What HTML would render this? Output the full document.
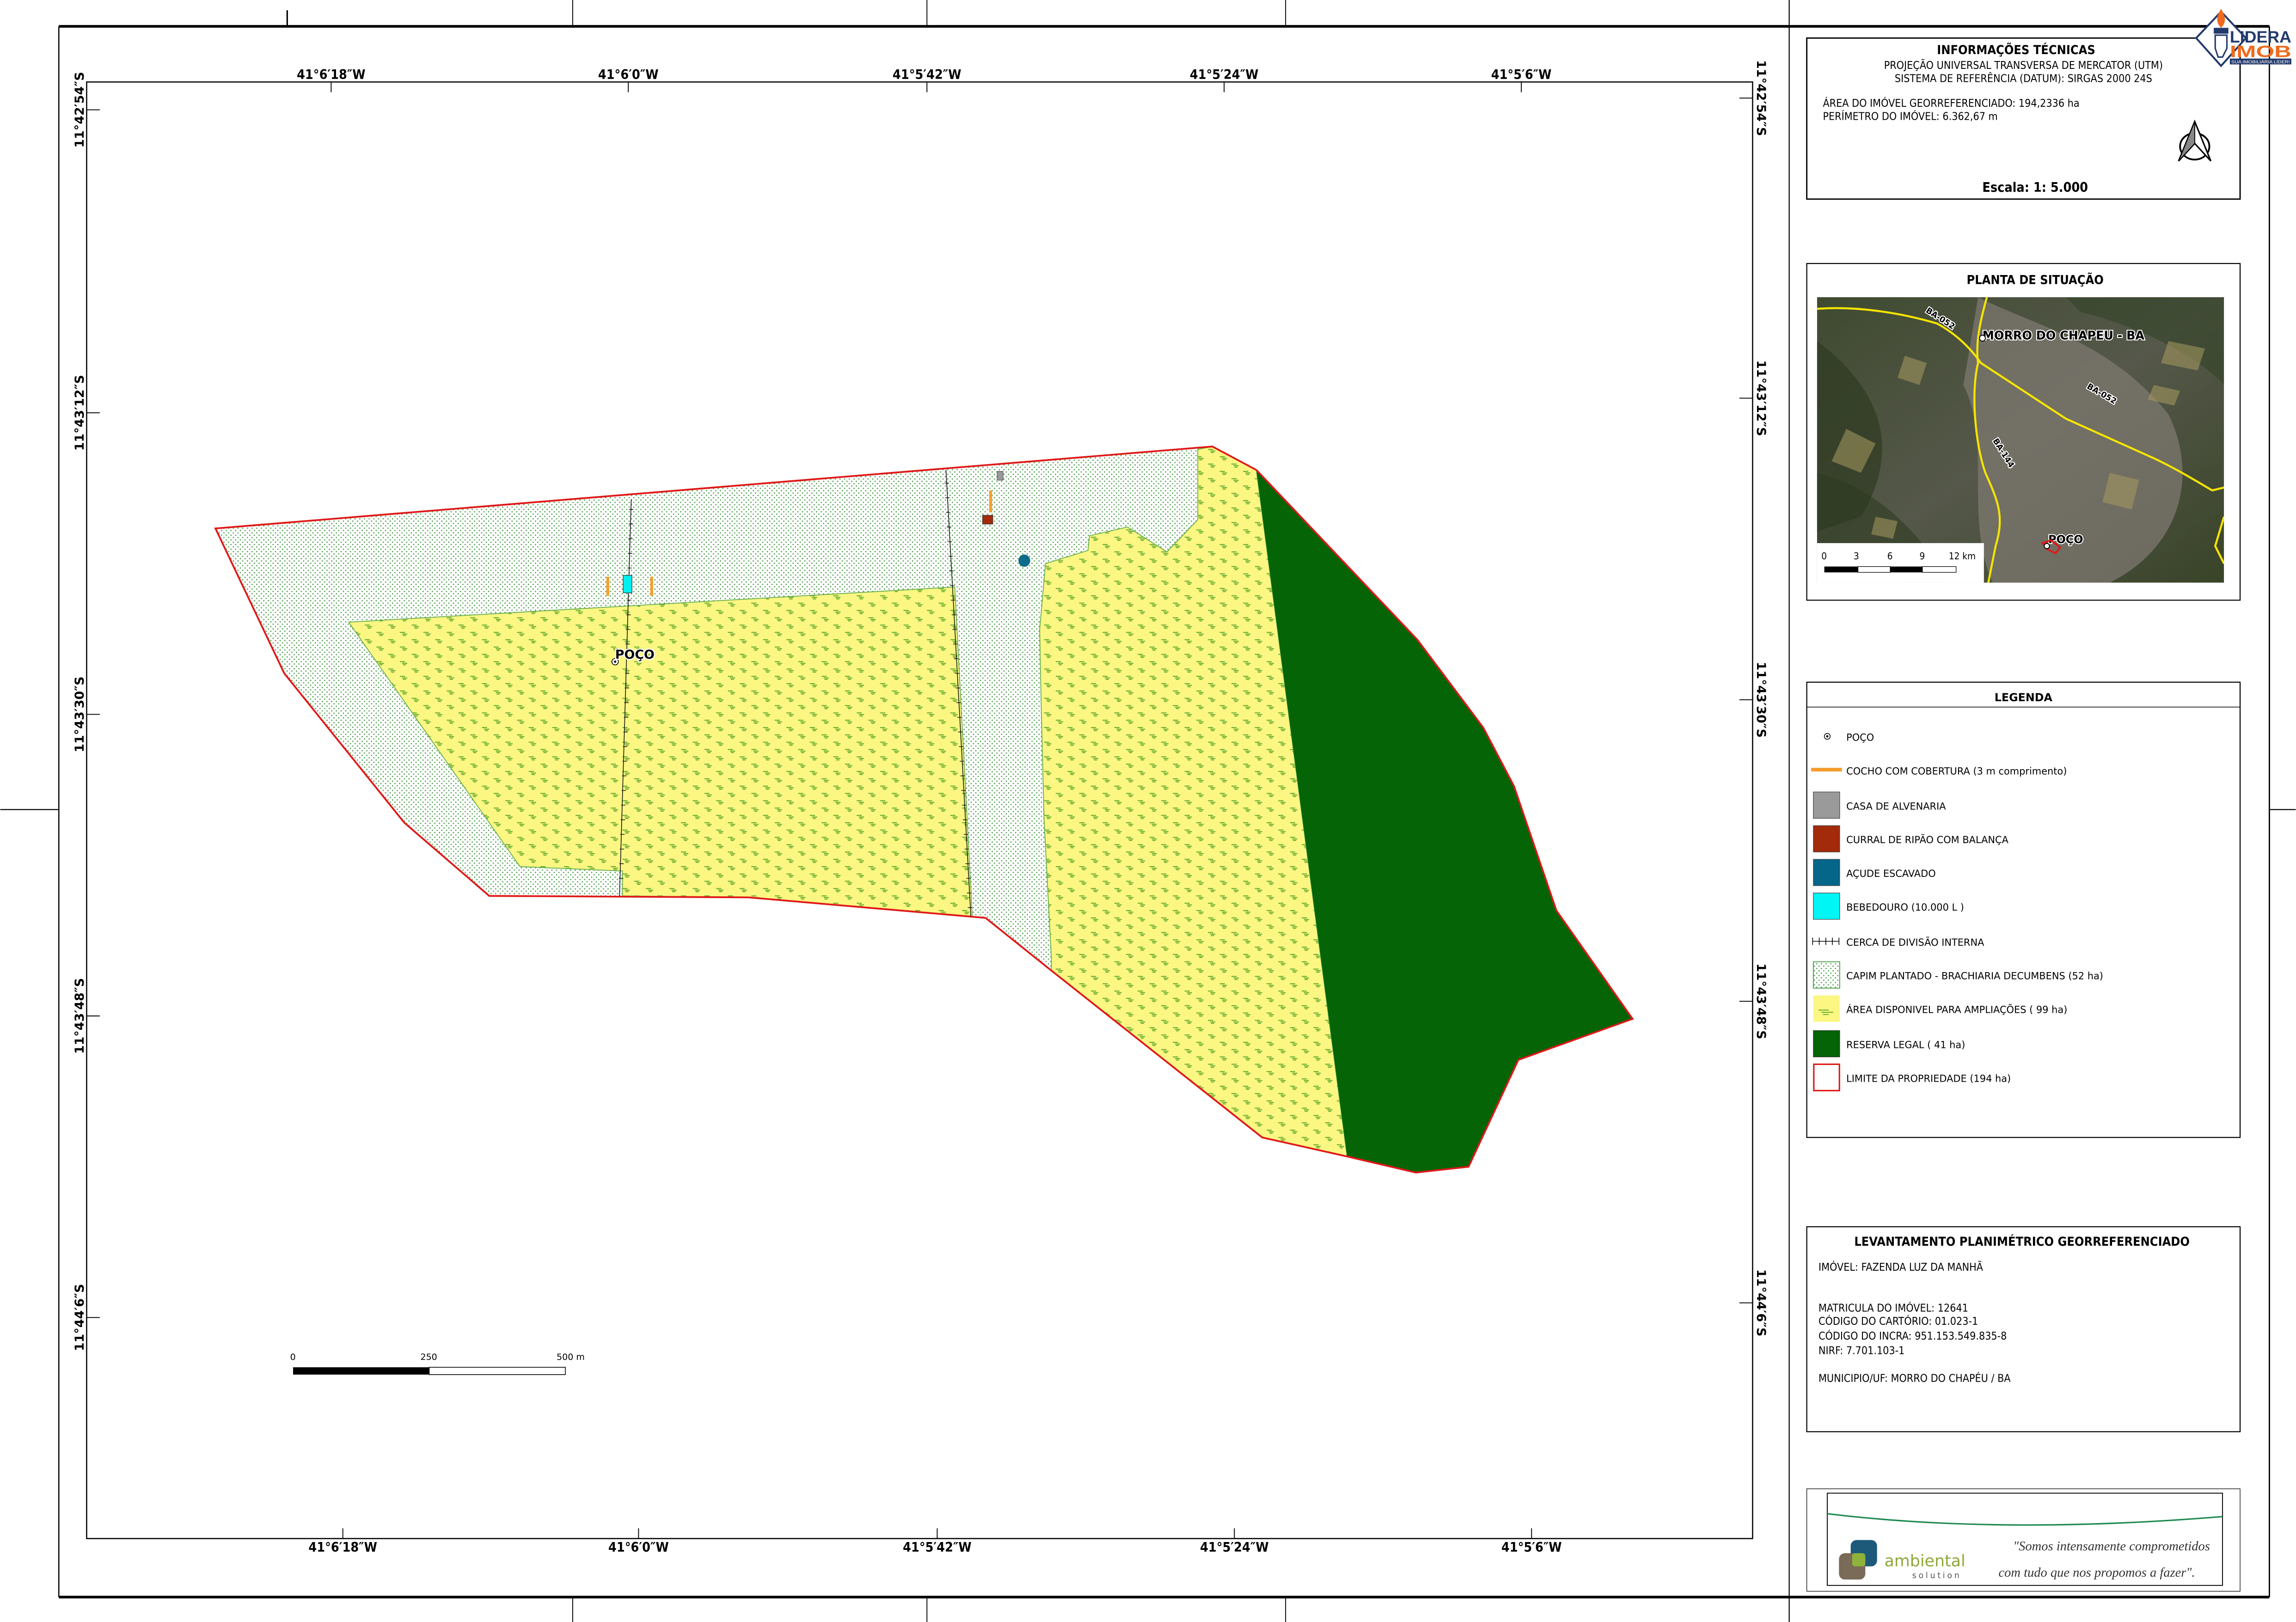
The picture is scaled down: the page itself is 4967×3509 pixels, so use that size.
<!DOCTYPE html>
<html><head><meta charset="utf-8"><style>
html,body{margin:0;padding:0;background:#fff;}
svg{display:block;}
.c{font-family:"DejaVu Sans Condensed","DejaVu Sans","Liberation Sans",sans-serif;}
.v{font-family:"DejaVu Sans","Liberation Sans",sans-serif;}
</style></head><body>
<svg width="4967" height="3509" viewBox="0 0 1568 1108" xmlns="http://www.w3.org/2000/svg">
<defs>
<pattern id="dots" width="3.2" height="3.2" patternUnits="userSpaceOnUse">
<rect width="3.2" height="3.2" fill="#fff"/>
<circle cx="0.8" cy="0.8" r="0.45" fill="#4f9e4f"/>
<circle cx="2.4" cy="2.4" r="0.45" fill="#4f9e4f"/>
</pattern>
<pattern id="grass" width="16" height="10" patternUnits="userSpaceOnUse">
<rect width="16" height="10" fill="#fbf782"/>
<g stroke="#5ea82a" stroke-width="0.65">
<line x1="1" y1="2" x2="4.5" y2="2"/><line x1="2.5" y1="3.1" x2="6" y2="3.1"/><line x1="3" y1="4.1" x2="5.2" y2="4.1"/>
<line x1="9" y1="7" x2="12.5" y2="7"/><line x1="10.5" y1="8.1" x2="14" y2="8.1"/><line x1="11" y1="9.1" x2="13.2" y2="9.1"/>
</g>
</pattern>
<linearGradient id="sat" x1="0" y1="0" x2="1" y2="1">
<stop offset="0" stop-color="#3f4a30"/><stop offset="0.5" stop-color="#55584a"/><stop offset="1" stop-color="#394428"/>
</linearGradient>
</defs>

<g stroke="#000" fill="none">
<line x1="40" y1="18" x2="1550" y2="18" stroke-width="1.8"/>
<line x1="40" y1="1091" x2="1550" y2="1091" stroke-width="1.8"/>
<line x1="40" y1="18" x2="40" y2="1091" stroke-width="0.8"/>
<line x1="1550" y1="18" x2="1550" y2="1091" stroke-width="0.9"/>
<line x1="1222" y1="0" x2="1222" y2="1108" stroke-width="0.7"/>
<line x1="196" y1="7" x2="196" y2="18" stroke-width="1"/>
<line x1="391" y1="0" x2="391" y2="18" stroke-width="0.6"/>
<line x1="633" y1="0" x2="633" y2="18" stroke-width="0.6"/>
<line x1="878" y1="0" x2="878" y2="18" stroke-width="0.6"/>
<line x1="391" y1="1091" x2="391" y2="1108" stroke-width="0.6"/>
<line x1="633" y1="1091" x2="633" y2="1108" stroke-width="0.6"/>
<line x1="878" y1="1091" x2="878" y2="1108" stroke-width="0.6"/>
<line x1="0" y1="553" x2="40" y2="553" stroke-width="0.7"/>
<line x1="1550" y1="553" x2="1568" y2="553" stroke-width="0.7"/>
<rect x="59" y="56" width="1138" height="995" stroke-width="0.8"/>
</g>
<g stroke="#000" stroke-width="0.6">
<line x1="226" y1="56" x2="226" y2="63"/><line x1="429" y1="56" x2="429" y2="63"/><line x1="633" y1="56" x2="633" y2="63"/><line x1="836" y1="56" x2="836" y2="63"/><line x1="1039" y1="56" x2="1039" y2="63"/>
<line x1="234" y1="1044" x2="234" y2="1051"/><line x1="436" y1="1044" x2="436" y2="1051"/><line x1="640" y1="1044" x2="640" y2="1051"/><line x1="843" y1="1044" x2="843" y2="1051"/><line x1="1046" y1="1044" x2="1046" y2="1051"/>
<line x1="59" y1="75" x2="68" y2="75"/><line x1="59" y1="282" x2="68" y2="282"/><line x1="59" y1="488" x2="68" y2="488"/><line x1="59" y1="694" x2="68" y2="694"/><line x1="59" y1="900" x2="68" y2="900"/>
<line x1="1188" y1="67" x2="1197" y2="67"/><line x1="1188" y1="272" x2="1197" y2="272"/><line x1="1188" y1="478" x2="1197" y2="478"/><line x1="1188" y1="684" x2="1197" y2="684"/><line x1="1188" y1="890" x2="1197" y2="890"/>
</g>
<g class="c" font-weight="bold" font-size="9" text-anchor="middle" fill="#000">
<text x="226" y="54">41°6′18″W</text><text x="429" y="54">41°6′0″W</text><text x="633" y="54">41°5′42″W</text><text x="836" y="54">41°5′24″W</text><text x="1039" y="54">41°5′6″W</text>
<text x="234" y="1060">41°6′18″W</text><text x="436" y="1060">41°6′0″W</text><text x="640" y="1060">41°5′42″W</text><text x="843" y="1060">41°5′24″W</text><text x="1046" y="1060">41°5′6″W</text>
</g>
<g class="v" font-weight="bold" font-size="8.5" text-anchor="middle" fill="#000">
<text transform="translate(57,75) rotate(-90)">11°42′54″S</text>
<text transform="translate(57,282) rotate(-90)">11°43′12″S</text>
<text transform="translate(57,488) rotate(-90)">11°43′30″S</text>
<text transform="translate(57,694) rotate(-90)">11°43′48″S</text>
<text transform="translate(57,900) rotate(-90)">11°44′6″S</text>
<text transform="translate(1200,67) rotate(90)">11°42′54″S</text>
<text transform="translate(1200,272) rotate(90)">11°43′12″S</text>
<text transform="translate(1200,478) rotate(90)">11°43′30″S</text>
<text transform="translate(1200,684) rotate(90)">11°43′48″S</text>
<text transform="translate(1200,890) rotate(90)">11°44′6″S</text>
</g>

<polygon points="147,361 828,305 858,321 968,437 1013,497 1034,537 1063,622 1115,696 1037,724 1003,797 967,801 920,790 862,777 718,663 673,627 511,613 334,612 276,562 194,460" fill="url(#dots)"/>
<polygon points="238,425 652,401 664,626 511,613 425,612 425,595 355,592" fill="url(#grass)" stroke="#6ab04c" stroke-width="0.6"/>
<polygon points="818,307 828,305 858,321 920,790 862,777 718,663 718,655 713,560 711,480 710,430 714,385 743,376 744,366 770,360 797,377 818,355" fill="url(#grass)" stroke="#6ab04c" stroke-width="0.6"/>
<polygon points="858,321 968,437 1013,497 1034,537 1063,622 1115,696 1037,724 1003,797 967,801 920,790" fill="#056405"/>
<polygon points="147,361 828,305 858,321 968,437 1013,497 1034,537 1063,622 1115,696 1037,724 1003,797 967,801 920,790 862,777 718,663 673,627 511,613 334,612 276,562 194,460" fill="none" stroke="#e01818" stroke-width="1.2"/>
<g stroke="#111" stroke-width="0.5">
<line x1="431" y1="341" x2="423" y2="612"/>
<line x1="646" y1="321" x2="663" y2="626"/>
</g>
<g stroke="#111" stroke-width="0.45">
<path d="M429.5 348h3M429.3 358h3M429 368h3M428.7 378h3M428.4 388h3M428 410h3M427.7 420h3M427.4 430h3M427.1 440h3M426.8 460h3M426.5 470h3M426.2 480h3M425.9 490h3M425.6 500h3M425.3 510h3M425 520h3M424.7 530h3M424.4 540h3M424.1 550h3M423.8 560h3M423.5 570h3M423.2 580h3M422.9 590h3M422.6 600h3"/>
<path d="M645 330h3M645.5 340h3M646 350h3M646.6 360h3M647.1 370h3M647.7 380h3M648.2 390h3M648.8 400h3M649.3 410h3M649.9 420h3M650.4 430h3M651 440h3M651.5 450h3M652.1 460h3M652.6 470h3M653.2 480h3M653.7 490h3M654.3 500h3M654.8 510h3M655.4 520h3M655.9 530h3M656.5 540h3M657 550h3M657.6 560h3M658.1 570h3M658.7 580h3M659.2 590h3M659.8 600h3M660.3 610h3M660.9 620h3"/>
</g>
<rect x="414" y="394" width="2" height="13" fill="#f5a030"/>
<rect x="444" y="394" width="2" height="13" fill="#f5a030"/>
<rect x="425.5" y="393" width="6" height="12" fill="#00f0f0" stroke="#333" stroke-width="0.4"/>
<rect x="681" y="322" width="4" height="6" fill="#9a9a9a" stroke="#555" stroke-width="0.4"/>
<rect x="675.5" y="335" width="2" height="15" fill="#f5a030"/>
<rect x="671" y="352" width="7" height="6" fill="#a32a0a" stroke="#333" stroke-width="0.4"/>
<ellipse cx="699.5" cy="383" rx="4" ry="4.2" fill="#0c6a8a"/>
<circle cx="420" cy="452" r="2.2" fill="#fff" stroke="#000" stroke-width="0.5"/><circle cx="420" cy="452" r="0.8" fill="#000"/>
<text x="420" y="450" class="v" font-weight="bold" font-size="8.5" fill="#000" stroke="#fff" stroke-width="1.5" paint-order="stroke">POÇO</text>
<g class="v" font-size="6" fill="#000">
<text x="198" y="929">0</text><text x="287" y="929">250</text><text x="380" y="929">500 m</text>
</g>
<rect x="200" y="934" width="93" height="5" fill="#000"/>
<rect x="293" y="934" width="93" height="5" fill="#fff" stroke="#000" stroke-width="0.5"/>

<rect x="1234" y="26" width="296" height="110" fill="#fff" stroke="#000" stroke-width="0.9"/>
<g class="c" fill="#000">
<text x="1377" y="37" font-size="8.5" font-weight="bold" text-anchor="middle">INFORMAÇÕES TÉCNICAS</text>
<text x="1382" y="47" font-size="7.3" text-anchor="middle">PROJEÇÃO UNIVERSAL TRANSVERSA DE MERCATOR (UTM)</text>
<text x="1382" y="56" font-size="7.3" text-anchor="middle">SISTEMA DE REFERÊNCIA (DATUM): SIRGAS 2000 24S</text>
<text x="1245" y="73" font-size="7.3">ÁREA DO IMÓVEL GEORREFERENCIADO: 194,2336 ha</text>
<text x="1245" y="82" font-size="7.3">PERÍMETRO DO IMÓVEL: 6.362,67 m</text>
<text x="1390" y="131" font-size="9" font-weight="bold" text-anchor="middle">Escala: 1: 5.000</text>
</g>
<g transform="translate(1499,97)">
<ellipse cx="0" cy="3" rx="10" ry="9" fill="none" stroke="#000" stroke-width="1.2"/>
<path d="M0 -14 L-11 13 L0 1 L11 13 Z" fill="#fff" stroke="#000" stroke-width="1"/>
<path d="M0 -14 L-11 13 L0 1 Z" fill="#888" stroke="#000" stroke-width="0.6"/>
</g>
<g transform="translate(1500,4)">
<path d="M17 4 L34 22 L17 41 L0 22 Z" fill="#fff" stroke="#233a6b" stroke-width="1.3"/>
<path d="M17 2 C14 7 13 11 17 15 C21 11 20 7 17 2Z" fill="#ee6a1c"/>
<rect x="12" y="15" width="10" height="4" fill="#233a6b"/>
<path d="M13 20 h8 v9 l-3 6 h-3 l-2-6z" fill="#fff" stroke="#233a6b" stroke-width="1"/>
<text x="23" y="25" font-family="Liberation Sans,sans-serif" font-weight="bold" font-size="11" fill="#233a6b" textLength="42" lengthAdjust="spacingAndGlyphs">LIDERA</text>
<text x="23" y="35" font-family="Liberation Sans,sans-serif" font-weight="bold" font-size="11" fill="#ee6a1c" textLength="42" lengthAdjust="spacingAndGlyphs">IMOB</text>
<rect x="23" y="36" width="42" height="4" fill="#233a6b"/>
<text x="24" y="39.3" font-family="Liberation Sans,sans-serif" font-size="3" fill="#fff" textLength="40" lengthAdjust="spacingAndGlyphs">SUA IMOBILIÁRIA LÍDER!</text>
</g>

<rect x="1234" y="180" width="296" height="230" fill="#fff" stroke="#000" stroke-width="0.7"/>
<text x="1390" y="194" class="c" font-size="8.5" font-weight="bold" text-anchor="middle">PLANTA DE SITUAÇÃO</text>
<svg x="1241" y="203" width="278" height="195" viewBox="0 0 278 195">
<rect width="278" height="195" fill="url(#sat)"/>
<path d="M110 0 C150 20 200 30 240 80 C260 120 250 170 200 195 L120 195 C100 150 120 100 100 60Z" fill="#7e7870" opacity="0.75"/>
<path d="M0 30 C40 60 60 100 30 150 L0 160Z" fill="#2f3b22" opacity="0.7"/>
<path d="M180 10 C220 20 260 40 278 60 L278 0 L170 0Z" fill="#334228" opacity="0.6"/>
<path d="M0 120 C40 130 70 160 90 195 L0 195Z" fill="#2e3a22" opacity="0.6"/>
<path d="M20 90 l20 10 l-10 20 l-20-8z M60 40 l15 5 l-5 15 l-15-5z M200 120 l20 5 l-5 20 l-20-5z M240 30 l25 5 l-5 15 l-25-5z M40 150 l15 3 l-3 12 l-15-3z M230 60 l18 4 l-4 10 l-18-4z" fill="#a89a60" opacity="0.55"/>
<path d="M0 8 C25 6 55 10 82 18 C95 25 105 35 112 45 L170 83 L230 110 C245 117 258 125 270 132 L278 130" fill="none" stroke="#f5e400" stroke-width="1.4"/>
<path d="M116 0 C112 15 108 30 110 45 C105 65 108 100 115 120 C124 140 128 150 122 170 L117 195" fill="none" stroke="#f5e400" stroke-width="1.4"/>
<path d="M278 150 L272 170 L278 182" fill="none" stroke="#f5e400" stroke-width="1.4"/>
<g font-family="DejaVu Sans,sans-serif" font-weight="bold" fill="#000" stroke="#fff" stroke-width="1.3" paint-order="stroke">
<text x="113" y="29" font-size="8">MORRO DO CHAPEU - BA</text>
<text x="158" y="168" font-size="7.5">POÇO</text>
<text transform="translate(74,10) rotate(33)" font-size="5.5">BA-052</text>
<text transform="translate(184,62) rotate(30)" font-size="5.5">BA-052</text>
<text transform="translate(120,98) rotate(58)" font-size="5.5">BA-144</text>
</g>
<circle cx="113" cy="28" r="2" fill="#fff" stroke="#000" stroke-width="0.6"/>
<path d="M154 168 l6 -2 l6 5 l-3 4 l-6 -3z" fill="none" stroke="#e01818" stroke-width="1.2"/>
<circle cx="157" cy="170" r="1.8" fill="#fff" stroke="#000" stroke-width="0.6"/>
<rect x="0" y="168" width="114" height="27" fill="#fff"/>
<g font-family="DejaVu Sans Condensed,sans-serif" font-size="6.5" fill="#000">
<text x="3" y="179">0</text><text x="25" y="179">3</text><text x="48" y="179">6</text><text x="70" y="179">9</text><text x="90" y="179">12 km</text>
</g>
<rect x="5" y="184" width="23" height="4" fill="#000"/><rect x="28" y="184" width="22" height="4" fill="#fff" stroke="#000" stroke-width="0.4"/>
<rect x="50" y="184" width="22" height="4" fill="#000"/><rect x="72" y="184" width="23" height="4" fill="#fff" stroke="#000" stroke-width="0.4"/>
</svg>

<rect x="1234" y="466" width="296" height="311" fill="#fff" stroke="#000" stroke-width="0.7"/>
<line x1="1234" y1="483" x2="1530" y2="483" stroke="#000" stroke-width="0.5"/>
<text x="1382" y="479" class="v" font-size="7.5" font-weight="bold" text-anchor="middle">LEGENDA</text>
<circle cx="1248" cy="503" r="2" fill="#fff" stroke="#000" stroke-width="0.5"/><circle cx="1248" cy="503" r="0.8" fill="#000"/>
<rect x="1237" y="524.5" width="21" height="2.5" fill="#f59c30"/>
<rect x="1238.5" y="541" width="18" height="18" fill="#9a9a9a" stroke="#444" stroke-width="0.4"/>
<rect x="1238.5" y="564" width="18" height="18" fill="#a32a0a" stroke="#444" stroke-width="0.4"/>
<rect x="1238.5" y="587" width="18" height="18" fill="#05668a" stroke="#444" stroke-width="0.4"/>
<rect x="1238.5" y="610" width="18" height="18" fill="#00f5f5" stroke="#444" stroke-width="0.4"/>
<g stroke="#000" stroke-width="0.5"><line x1="1238" y1="643" x2="1256" y2="643"/><path d="M1238 640.5v5M1242.5 640.5v5M1247 640.5v5M1251.5 640.5v5M1256 640.5v5"/></g>
<rect x="1238.5" y="657" width="18" height="18" fill="url(#dots)" stroke="#4f9e4f" stroke-width="0.6"/>
<rect x="1238.5" y="680" width="18" height="18" fill="#fbf782"/>
<g stroke="#5ea82a" stroke-width="0.6"><line x1="1242" y1="690" x2="1249" y2="690"/><line x1="1244" y1="691.5" x2="1252" y2="691.5"/><line x1="1245" y1="693" x2="1249" y2="693"/></g>
<rect x="1238.5" y="704" width="18" height="18" fill="#056405" stroke="#333" stroke-width="0.4"/>
<rect x="1238.8" y="727" width="17.5" height="18" fill="#fff" stroke="#e01818" stroke-width="1"/>
<g class="v" font-size="6.6" fill="#000">
<text x="1261" y="506">POÇO</text>
<text x="1261" y="529">COCHO COM COBERTURA (3 m comprimento)</text>
<text x="1261" y="553">CASA DE ALVENARIA</text>
<text x="1261" y="576">CURRAL DE RIPÃO COM BALANÇA</text>
<text x="1261" y="599">AÇUDE ESCAVADO</text>
<text x="1261" y="622">BEBEDOURO (10.000 L )</text>
<text x="1261" y="646">CERCA DE DIVISÃO INTERNA</text>
<text x="1261" y="669">CAPIM PLANTADO - BRACHIARIA DECUMBENS (52 ha)</text>
<text x="1261" y="692">ÁREA DISPONIVEL PARA AMPLIAÇÕES ( 99 ha)</text>
<text x="1261" y="716">RESERVA LEGAL ( 41 ha)</text>
<text x="1261" y="739">LIMITE DA PROPRIEDADE (194 ha)</text>
</g>

<rect x="1234" y="838" width="296" height="140" fill="#fff" stroke="#000" stroke-width="0.7"/>
<g class="c" fill="#000" font-size="7.3">
<text x="1381" y="851" font-size="8.5" font-weight="bold" text-anchor="middle">LEVANTAMENTO PLANIMÉTRICO GEORREFERENCIADO</text>
<text x="1242" y="868">IMÓVEL: FAZENDA LUZ DA MANHÃ</text>
<text x="1242" y="896">MATRICULA DO IMÓVEL: 12641</text>
<text x="1242" y="905">CÓDIGO DO CARTÓRIO:  01.023-1</text>
<text x="1242" y="915">CÓDIGO DO INCRA:  951.153.549.835-8</text>
<text x="1242" y="925">NIRF: 7.701.103-1</text>
<text x="1242" y="944">MUNICIPIO/UF: MORRO DO CHAPÉU / BA</text>
</g>

<rect x="1234" y="1017" width="296" height="70" fill="#fff" stroke="#000" stroke-width="0.4"/>
<rect x="1248" y="1020" width="270" height="63" fill="#fff" stroke="#000" stroke-width="0.6"/>
<path d="M1248 1034 C1330 1044 1420 1044 1518 1036" fill="none" stroke="#1e8a50" stroke-width="1"/>
<rect x="1264" y="1052" width="18" height="18" rx="4" fill="#1d5a7a"/>
<rect x="1256" y="1061" width="18" height="18" rx="4" fill="#7a6a58"/>
<rect x="1265" y="1061" width="9" height="9" rx="2" fill="#8fb33a"/>
<text x="1287" y="1070" font-family="DejaVu Sans,sans-serif" font-size="11" fill="#8fa83a">ambiental</text>
<text x="1306" y="1078" font-family="DejaVu Sans,sans-serif" font-size="5.5" fill="#555" letter-spacing="1.5">solution</text>
<g font-family="Liberation Serif,serif" font-style="italic" font-size="9" fill="#333">
<text x="1375" y="1059">"Somos intensamente comprometidos</text>
<text x="1365" y="1077">com tudo que nos propomos a fazer".</text>
</g>
</svg>
</body></html>
